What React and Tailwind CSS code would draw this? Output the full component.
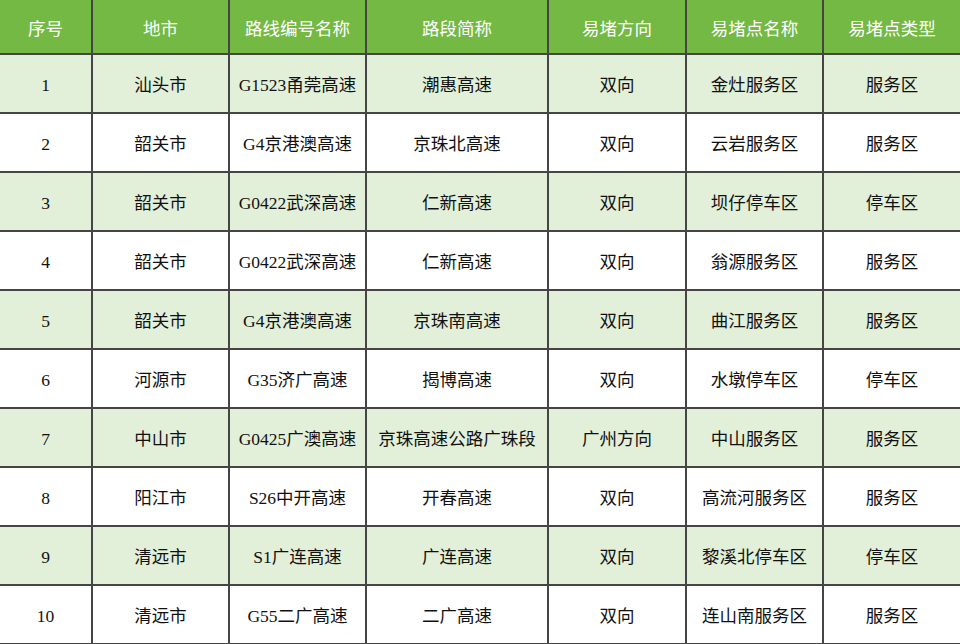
import React from 'react';

const headers = ['序号', '地市', '路线编号名称', '路段简称', '易堵方向', '易堵点名称', '易堵点类型'];
const widths = ['w-[92px]', 'w-[137px]', 'w-[137px]', 'w-[182px]', 'w-[138px]', 'w-[137px]', 'w-[137px]'];

const rows = [
  ['1', '汕头市', 'G1523甬莞高速', '潮惠高速', '双向', '金灶服务区', '服务区'],
  ['2', '韶关市', 'G4京港澳高速', '京珠北高速', '双向', '云岩服务区', '服务区'],
  ['3', '韶关市', 'G0422武深高速', '仁新高速', '双向', '坝仔停车区', '停车区'],
  ['4', '韶关市', 'G0422武深高速', '仁新高速', '双向', '翁源服务区', '服务区'],
  ['5', '韶关市', 'G4京港澳高速', '京珠南高速', '双向', '曲江服务区', '服务区'],
  ['6', '河源市', 'G35济广高速', '揭博高速', '双向', '水墩停车区', '停车区'],
  ['7', '中山市', 'G0425广澳高速', '京珠高速公路广珠段', '广州方向', '中山服务区', '服务区'],
  ['8', '阳江市', 'S26中开高速', '开春高速', '双向', '高流河服务区', '服务区'],
  ['9', '清远市', 'S1广连高速', '广连高速', '双向', '黎溪北停车区', '停车区'],
  ['10', '清远市', 'G55二广高速', '二广高速', '双向', '连山南服务区', '服务区'],
];

export default function App() {
  return (
    <div
      className="w-[960px] h-[644px] overflow-hidden bg-white"
      style={{ fontFamily: '"Liberation Serif", "Noto Sans CJK SC", serif' }}
    >
      <table className="w-[960px] table-fixed border-collapse text-[17.5px]">
        <thead>
          <tr className="h-[54px] bg-[#74b943]">
            {headers.map((h, i) => (
              <th
                key={h}
                className={`${widths[i]} border-2 border-t-0 border-[#454545] pt-[5px] font-normal text-white text-center first:border-l-0 last:border-r-0`}
              >
                {h}
              </th>
            ))}
          </tr>
        </thead>
        <tbody>
          {rows.map((r, ri) => (
            <tr key={ri} className={`h-[59px] ${ri % 2 === 0 ? 'bg-[#e2efd9]' : 'bg-white'}`}>
              {r.map((c, ci) => (
                <td
                  key={ci}
                  className="border-2 border-[#454545] pt-[3px] text-center text-[#111] first:border-l-0 last:border-r-0"
                >
                  {c}
                </td>
              ))}
            </tr>
          ))}
        </tbody>
      </table>
    </div>
  );
}
